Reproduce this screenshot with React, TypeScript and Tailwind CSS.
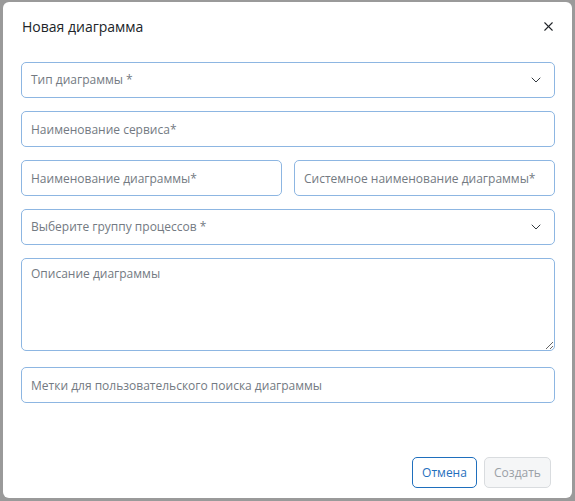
import { ChevronDown, X } from 'lucide-react';

const field =
  'h-9 w-full rounded-[5px] border border-[#8db6e2] bg-white px-[9px] text-[12px] text-[#737a82] outline-none placeholder:text-[#737a82]';

function SelectBox({ label }: { label: string }) {
  return (
    <div className="flex h-9 w-full items-center justify-between rounded-[5px] border border-[#8db6e2] bg-white pl-[9px] pr-[10px] text-[12px] text-[#737a82]">
      <span>{label}</span>
      <ChevronDown className="h-4 w-4 text-[#343a40]" strokeWidth={1.5} />
    </div>
  );
}

export default function App() {
  return (
    <div
      className="h-[501px] w-[575px] bg-[#9a9a9a] pl-[3px] pt-[2px]"
      style={{ fontFamily: '"Open Sans", "Noto Sans", sans-serif' }}
    >
      <div className="flex h-[496px] w-[569px] flex-col rounded-[6px] bg-white">
        <div className="flex items-center justify-between pl-[19px] pr-[16px] pt-[14px]">
          <h2 className="text-[14px] font-normal text-[#212529]">Новая диаграмма</h2>
          <X className="h-[15px] w-[15px] text-[#212529]" strokeWidth={1.7} />
        </div>

        <div className="flex flex-col gap-[13px] pl-[18px] pr-[17px] pt-[25px]">
          <SelectBox label="Тип диаграммы *" />
          <input className={field} placeholder="Наименование сервиса*" />
          <div className="flex gap-[12px]">
            <input className={field} placeholder="Наименование диаграммы*" />
            <input className={field} placeholder="Системное наименование диаграммы*" />
          </div>
          <SelectBox label="Выберите группу процессов *" />
          <textarea
            className="h-[93px] w-full resize-y rounded-[5px] border border-[#8db6e2] bg-white px-[9px] py-[6px] text-[12px] text-[#737a82] outline-none placeholder:text-[#737a82]"
            placeholder="Описание диаграммы"
          />
          <input className={`${field} mt-[3px]`} placeholder="Метки для пользовательского поиска диаграммы" />
        </div>

        <div className="mt-auto flex justify-end gap-[7px] pb-[10px] pr-[21px]">
          <button className="h-[31px] w-[65px] rounded-[5px] border border-[#1f6fbd] bg-white text-[12px] text-[#1f6fbd]">
            Отмена
          </button>
          <button
            disabled
            className="h-[31px] w-[67px] rounded-[5px] border border-[#d9dcdf] bg-[#f5f6f7] text-[12px] text-[#9aa0a6]"
          >
            Создать
          </button>
        </div>
      </div>
    </div>
  );
}
